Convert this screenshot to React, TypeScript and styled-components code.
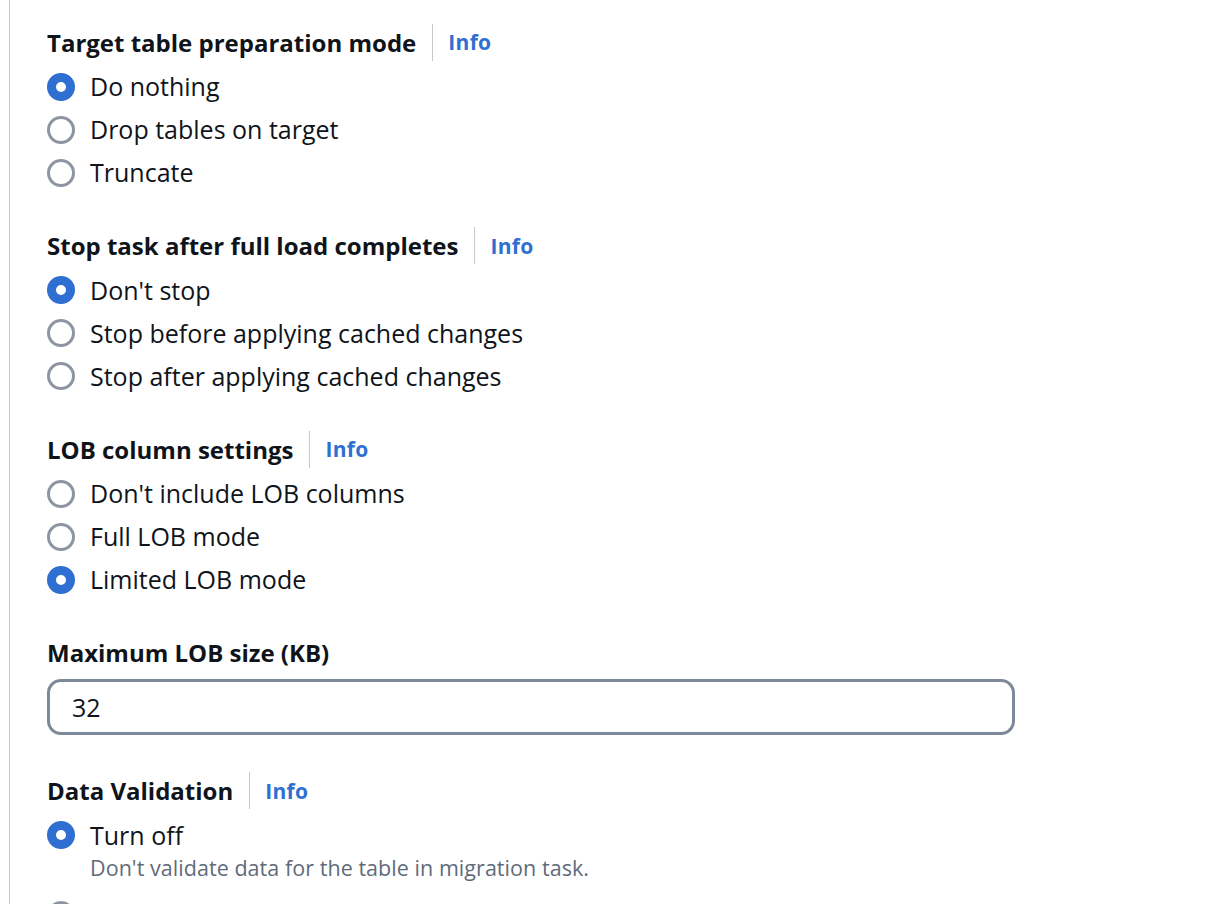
import styled, { createGlobalStyle } from 'styled-components'

const GlobalStyle = createGlobalStyle`
	html, body {
		margin: 0;
		padding: 0;
		background: #ffffff;
	}
	body {
		font-family: 'Open Sans', 'Noto Sans', Arial, sans-serif;
		color: #0f141a;
	}
`

type Option = { label: string; description?: string }

type RadioSection = {
	title: string
	info?: boolean
	options: Option[]
	selected: number
}

const prepSections: RadioSection[] = [
	{
		title: 'Target table preparation mode',
		info: true,
		options: [
			{ label: 'Do nothing' },
			{ label: 'Drop tables on target' },
			{ label: 'Truncate' },
		],
		selected: 0,
	},
	{
		title: 'Stop task after full load completes',
		info: true,
		options: [
			{ label: "Don't stop" },
			{ label: 'Stop before applying cached changes' },
			{ label: 'Stop after applying cached changes' },
		],
		selected: 0,
	},
	{
		title: 'LOB column settings',
		info: true,
		options: [
			{ label: "Don't include LOB columns" },
			{ label: 'Full LOB mode' },
			{ label: 'Limited LOB mode' },
		],
		selected: 2,
	},
]

const validation: RadioSection = {
	title: 'Data Validation',
	info: true,
	options: [
		{
			label: 'Turn off',
			description: "Don't validate data for the table in migration task.",
		},
		{ label: 'Turn on' },
	],
	selected: 0,
}

const Section = ({ section }: { section: RadioSection }) => (
	<Field>
		<LabelRow>
			<Label>{section.title}</Label>
			{section.info && (
				<>
					<Divider />
					<InfoLink href="#">Info</InfoLink>
				</>
			)}
		</LabelRow>
		<RadioList>
			{section.options.map((opt, i) => (
				<RadioItem key={opt.label}>
					<RadioCircle $checked={i === section.selected} />
					<RadioText>
						<RadioLabel>{opt.label}</RadioLabel>
						{opt.description && <RadioDesc>{opt.description}</RadioDesc>}
					</RadioText>
				</RadioItem>
			))}
		</RadioList>
	</Field>
)

const App = () => {
	return (
		<>
			<GlobalStyle />
			<Page>
				<Panel>
					{prepSections.map((s) => (
						<Section key={s.title} section={s} />
					))}
					<Field $after={4.5}>
						<LabelRow>
							<Label>Maximum LOB size (KB)</Label>
						</LabelRow>
						<Input defaultValue="32" />
					</Field>
					<Section section={validation} />
				</Panel>
			</Page>
		</>
	)
}

export default App

const Page = styled.div`
	width: 1208px;
	height: 904px;
	overflow: hidden;
	padding-left: 9px;
	box-sizing: border-box;
`

const Panel = styled.div`
	border-left: 1px solid #c6c6cd;
	min-height: 904px;
	padding: 22px 0 0 37px;
	display: flex;
	flex-direction: column;
	gap: 31.5px;
	box-sizing: border-box;
`

const Field = styled.div<{ $after?: number }>`
	display: flex;
	flex-direction: column;
	margin-bottom: ${(p) => p.$after ?? 0}px;
`

const LabelRow = styled.div`
	display: flex;
	align-items: center;
	height: 40px;
`

const Label = styled.span`
	font-size: 24px;
	font-weight: 700;
	color: #0f141a;
`

const Divider = styled.span`
	width: 1px;
	height: 37px;
	background: #c6c6cd;
	margin: 0 15px 0 16px;
`

const InfoLink = styled.a`
	font-size: 21px;
	font-weight: 700;
	color: #2f6fd1;
	text-decoration: none;
	letter-spacing: 0.3px;
`

const RadioList = styled.div`
	display: flex;
	flex-direction: column;
	margin-top: 3px;
`

const RadioItem = styled.label`
	display: flex;
	align-items: flex-start;
	gap: 15px;
	padding: 7px 0;
`

const RadioCircle = styled.span<{ $checked: boolean }>`
	flex: none;
	width: 28px;
	height: 28px;
	margin-top: 0.5px;
	border-radius: 50%;
	box-sizing: border-box;
	border: ${(p) => (p.$checked ? '9px solid #2f6fd1' : '3px solid #8c95a1')};
	background: #ffffff;
`

const RadioText = styled.div`
	display: flex;
	flex-direction: column;
`

const RadioLabel = styled.span`
	font-size: 25px;
	line-height: 29px;
	color: #0f141a;
`

const RadioDesc = styled.span`
	font-size: 21.5px;
	line-height: 30px;
	letter-spacing: 0.05px;
	margin: 3px 0 4px;
	color: #5f6b7a;
`

const Input = styled.input`
	margin-top: 6px;
	width: 968px;
	height: 56px;
	box-sizing: border-box;
	border: 3px solid #7d8998;
	border-radius: 14px;
	padding: 0 22px;
	font-family: 'Open Sans', 'Noto Sans', Arial, sans-serif;
	font-size: 25px;
	color: #0f141a;
	outline: none;
`
